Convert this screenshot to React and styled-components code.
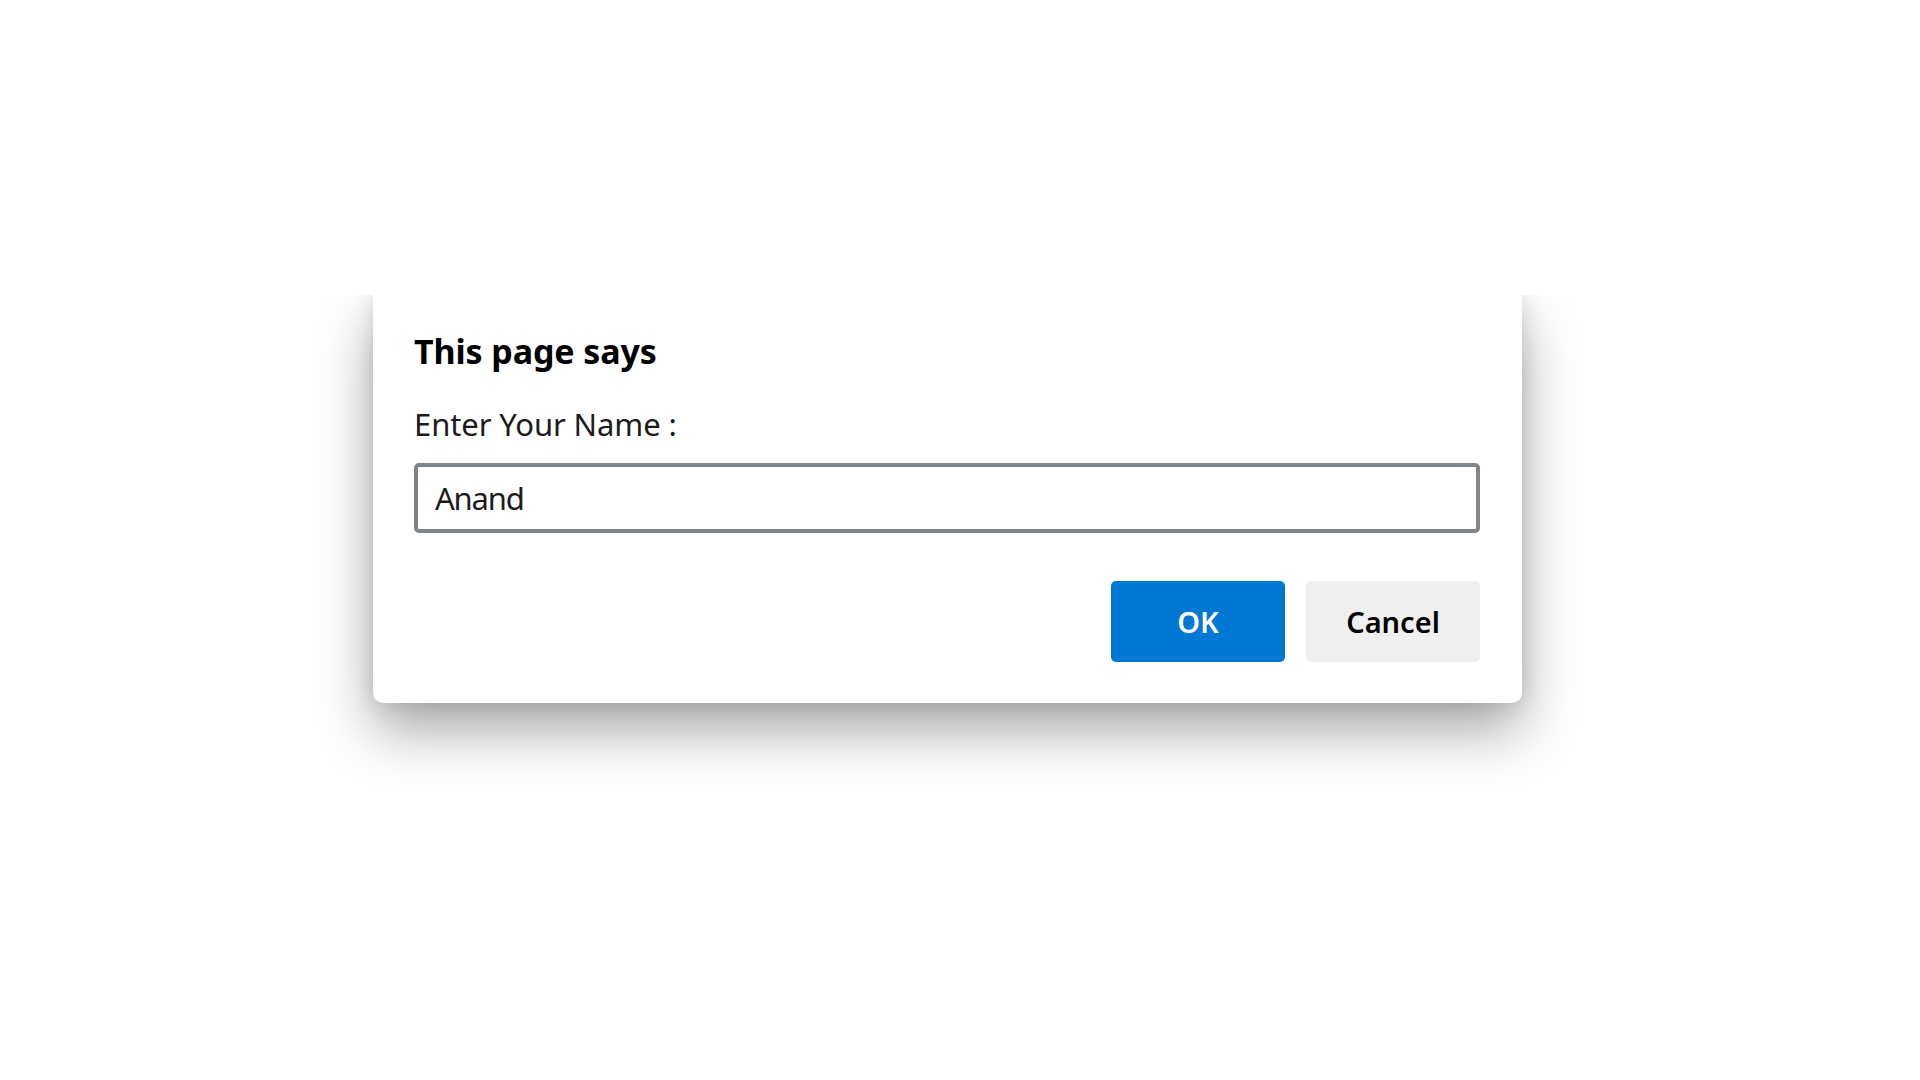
import React, { useState } from "react";
import styled, { createGlobalStyle } from "styled-components";

const GlobalStyle = createGlobalStyle`
  html, body {
    margin: 0;
    padding: 0;
    background: #ffffff;
  }
  body {
    font-family: "Noto Sans", "Open Sans", "Liberation Sans", sans-serif;
  }
`;

const Page = styled.main`
  min-height: 1080px;
  box-sizing: border-box;
  padding: 295px 0 0 373px;
  display: flex;
  align-items: flex-start;
`;

const Dialog = styled.form`
  width: 1149px;
  box-sizing: border-box;
  padding: 36px 42px 41px 41px;
  background: #ffffff;
  border-radius: 0 0 10px 10px;
  box-shadow: 0 28px 56px rgba(0, 0, 0, 0.34), 0 0 22px rgba(0, 0, 0, 0.12);
  clip-path: inset(0 -160px -220px -160px);
  display: flex;
  flex-direction: column;
`;

const Title = styled.h1`
  margin: 0;
  font-size: 34px;
  line-height: 40px;
  font-weight: 700;
  letter-spacing: -0.1px;
  color: #000000;
`;

const Message = styled.label`
  margin-top: 33px;
  font-size: 31px;
  line-height: 40px;
  letter-spacing: -0.1px;
  color: #1b1b1b;
`;

const Field = styled.input`
  margin-top: 19px;
  width: 100%;
  height: 70px;
  box-sizing: border-box;
  border: 4px solid #80858a;
  border-radius: 5px;
  padding: 0 17px;
  font-family: inherit;
  font-size: 31px;
  letter-spacing: -1.2px;
  color: #1b1b1b;
  background: #ffffff;
  outline: none;
`;

const Actions = styled.div`
  margin-top: 48px;
  display: flex;
  justify-content: flex-end;
  gap: 21px;
`;

const Button = styled.button`
  width: 174px;
  height: 81px;
  border: none;
  border-radius: 5px;
  font-family: inherit;
  font-size: 29px;
  font-weight: 600;
  cursor: pointer;
  background: ${(p) => (p.$primary ? "#0078d4" : "#efefef")};
  color: ${(p) => (p.$primary ? "#ffffff" : "#000000")};
`;

const App = () => {
  const [name, setName] = useState("Anand");

  return (
    <>
      <GlobalStyle />
      <Page>
        <Dialog onSubmit={(e) => e.preventDefault()}>
          <Title>This page says</Title>
          <Message htmlFor="prompt-name">Enter Your Name :</Message>
          <Field
            id="prompt-name"
            type="text"
            value={name}
            onChange={(e) => setName(e.target.value)}
          />
          <Actions>
            <Button type="submit" $primary>OK</Button>
            <Button type="button">Cancel</Button>
          </Actions>
        </Dialog>
      </Page>
    </>
  );
};

export default App;
